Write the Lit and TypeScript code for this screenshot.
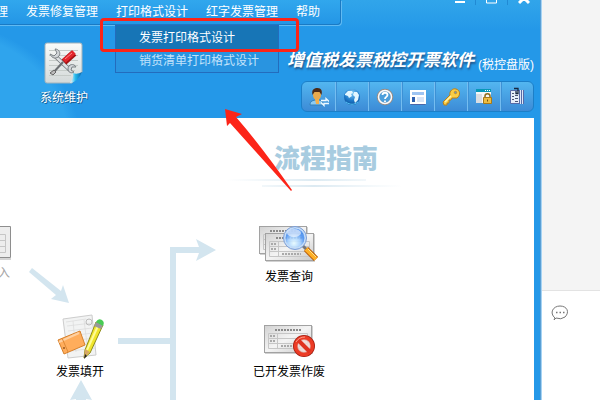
import { LitElement, html, css, svg } from "lit";
import { customElement } from "lit/decorators.js";

const invoiceCard = (x: number, y: number, w: number, h: number) => svg`
  <rect x=${x + 1} y=${y + 1} width=${w} height=${h} fill="#000" opacity=".18"/>
  <rect x=${x + 0.5} y=${y + 0.5} width=${w - 1} height=${h - 1} fill="url(#paper)" stroke="#a2a2a2"/>
  <path d="M${x + 11} ${y + 5}h${w - 22}" stroke="#8a8a8a" stroke-width="2" stroke-dasharray="2 1"/>
  <path d="M${x + 4.5} ${y + 8.5}h${w - 9}v15h-${w - 9}zM${x + 4.5} ${y + 13.5}h${w - 9}M${x + 4.5} ${y + 18.5}h${w - 9}M${x + 13.5} ${y + 8.5}v15" fill="none" stroke="#c6c6c6"/>
  <path d="M${x + 6} ${y + 11}h6M${x + 6} ${y + 16}h6M${x + 17} ${y + 21}h19" stroke="#a9a9a9" stroke-width="2" stroke-dasharray="2 1"/>`;

const paperDefs = svg`<defs><linearGradient id="paper" x1="0" y1="0" x2="1" y2="1"><stop stop-color="#d2d2d2"/><stop offset=".5" stop-color="#f4f4f4"/><stop offset="1" stop-color="#c8c8c8"/></linearGradient></defs>`;

const tools = [
  {
    name: "操作员",
    icon: svg`<path d="M1 18c0-4 3-5 7-5s6 1 6 5z" fill="#8ccbf3" stroke="#357fb8"/><path d="M6 12h4l0 5h-3z" fill="#f4b04c"/><ellipse cx="8" cy="8" rx="4" ry="5" fill="#e8a94c"/><path d="M3.500 8c-1-5 1-7 5-7s5 3 4 7l-2-3-5 0z" fill="#4b2a17"/><path d="M12 13.500h5v-2l3 3M20 16.500h-5v2l-3-3" fill="none" stroke="#eef9ff" stroke-width="1.300"/>`,
  },
  {
    name: "网络",
    icon: svg`<defs><radialGradient id="globe" cx=".5" cy=".25" r=".8"><stop stop-color="#7ccbf8"/><stop offset=".6" stop-color="#1d78c8"/><stop offset="1" stop-color="#0a4c97"/></radialGradient></defs><circle cx="10" cy="10" r="8" fill="url(#globe)"/><path d="M3 7l3-3 4 0 1 2-2 1 1 2-3 2-1-2-3-1zM12 5l3 0 2 3-1 5-3 3-1-3 1-3-2-2z" fill="#e2f6ff"/><path d="M4 15c4 3 8 3 12 0" stroke="#53c3f5" fill="none"/>`,
  },
  {
    name: "帮助",
    icon: svg`<circle cx="10" cy="10" r="7" fill="#4c9edb" stroke="#9b8c83" stroke-width="2.500"/><circle cx="10" cy="10" r="6.500" fill="none" stroke="#f8fbff" stroke-width="1.500"/><path d="M7.500 8c0-3 5-3 5 0 0 2-2.500 1.800-2.500 4M10 13.500v1.500" fill="none" stroke="#fff" stroke-width="1.800"/>`,
  },
  {
    name: "窗口",
    icon: svg`<rect x="2.500" y="3.500" width="15" height="13" fill="#fff" stroke="#fff"/><path d="M4 5h12v3H4z" fill="#9ec4f2"/><path d="M4 10h3v5H4z" fill="#2e5fae"/><path d="M9 10h7v5H9z" fill="#d8e4f6"/><path d="M2.500 17.500h15" stroke="#4c66a8"/>`,
  },
  {
    name: "密钥",
    icon: svg`<path d="M2 15l7-7c-1-4 3-7 6-6 4 1 5 6 1 9l-5 0-1 2-2 0 0 3-2 0 0 2-3 0z" fill="#f9cd45" stroke="#bb7f18"/><path d="M4 15l6-6" stroke="#fff2ab" stroke-width="1.500"/><circle cx="14.500" cy="5.500" r="1.200" fill="#5a9ad8" stroke="#c88d20"/>`,
  },
  {
    name: "锁定",
    icon: svg`<path d="M2 3h15v13H2z" fill="#f5f7f8"/><path d="M2 2h15v3H2z" fill="#0798b7"/><path d="M11 3.500h5" stroke="#fff" stroke-dasharray="1 1"/><path d="M2 7h6v9H2z" fill="#d9dde2"/><path d="M11 11V9c0-3 5-3 5 0v2" fill="none" stroke="#8b6a19" stroke-width="1.500"/><path d="M9.500 10.500h8v6h-8z" fill="#edbd42" stroke="#a77919"/><path d="M13.500 12.500v2" stroke="#76520e"/>`,
  },
  {
    name: "报表",
    icon: svg`<path d="M3.500 3.500h9v13h-9z" fill="#e6edf9" stroke="#566aa8"/><path d="M5 6.500h2M8 8.500h3M5 9.500h2M8 11.500h3M5 12.500h2M8 14.500h3" stroke="#4b5575"/><path d="M13 3h4v14h-4z" fill="#dce7f8"/><path d="M12.500 3v14M14.500 3v14M16.500 3v14" stroke="#566aa8"/><path d="M7 1.500h4v5H9V4" fill="none" stroke="#17263f" stroke-width="1.300"/>`,
  },
];

@customElement("app-root")
export class AppRoot extends LitElement {
  static styles = css`
    :host {
      display: grid;
      grid-template-columns: minmax(0, 9fr) minmax(0, 1fr);
      min-height: 100vh;
      overflow: hidden;
      position: relative;
      background: #f4f4f4;
      font: 12px/16px "Liberation Sans", "Noto Sans CJK SC", sans-serif;
    }
    * { box-sizing: border-box; }
    button {
      border: 0;
      padding: 0;
      background: none;
      color: inherit;
      font: inherit;
      white-space: nowrap;
      cursor: pointer;
    }
    svg { display: block; }
    .window {
      display: flex;
      flex-direction: column;
      padding-right: 6px;
      background:
        radial-gradient(ellipse 150px 120px at -70px 140px, #2fa4ed 0 92%, transparent 100%),
        linear-gradient(#31a5ea, #2498e8 30px);
      box-shadow: 1px 0 #5a9fd4, 2px 0 #a5d3f4;
    }
    .top {
      display: flex;
      justify-content: space-between;
      height: 25px;
    }
    .menu {
      display: flex;
      gap: 18px;
      align-items: flex-start;
      padding: 4px 20px 0 0;
      margin-left: -4px;
      color: #fff;
      background: linear-gradient(#31a7ed, #2496e6);
      border-right: 1px solid #1a7ac4;
      border-bottom: 1px solid #1a7ac4;
      border-radius: 0 0 4px 0;
      box-shadow: 1px 1px #61baf2;
    }
    .dropdown {
      position: absolute;
      z-index: 1;
      top: 25px;
      left: 115px;
      display: flex;
      flex-direction: column;
      width: 164px;
      border: 1px solid #236cbd;
      background: #2994e0;
      color: #c2e3fb;
    }
    .dropdown button { height: 22px; padding-left: 23px; text-align: left; }
    .dropdown .chosen { height: 24px; background: #1775b6; color: #fff; }
    .controls { display: flex; margin-right: -5px; }
    .controls button {
      width: 32px;
      height: 5px;
      border-left: 1px solid #218ad4;
      overflow: hidden;
    }
    .controls button:first-child { border-color: transparent; }
    .controls svg { margin: auto; }
    .header {
      display: flex;
      justify-content: space-between;
      align-items: flex-start;
      height: 93px;
      color: #fff;
    }
    .module {
      display: flex;
      flex-direction: column;
      align-items: center;
      gap: 6px;
      margin: 17px 0 0 40px;
      text-shadow: 1px 1px #17659f, -1px 0 #1d70b2;
    }
    .brand { display: flex; flex-direction: column; align-items: flex-end; }
    .name {
      display: flex;
      align-items: flex-end;
      gap: 4px;
      margin: 20px 0 8px;
      height: 28px;
    }
    h1 {
      margin: 0;
      font: italic 700 17px/28px "Noto Sans CJK SC", sans-serif;
      text-shadow: 1px 2px 2px #23578b;
      white-space: nowrap;
    }
    .edition { line-height: 16px; white-space: nowrap; }
    .tools {
      display: flex;
      border: 1px solid #1c7fc8;
      border-radius: 6px;
      background: linear-gradient(#53b6f0, #3c8bd6);
    }
    .tools button {
      display: grid;
      place-items: center;
      width: 33px;
      height: 29px;
      border-left: 1px solid #75bdf0;
      box-shadow: inset 1px 0 #3d91d5;
    }
    .tools button:first-child { border-left: 0; box-shadow: none; }
    .guide {
      position: relative;
      flex: 1;
      min-height: 282px;
      overflow: hidden;
      background: #fff;
    }
    h2 {
      position: absolute;
      left: 274px;
      top: 23px;
      margin: 0;
      color: #a8cce0;
      font: 900 26px/32px "Noto Sans CJK SC", sans-serif;
      white-space: nowrap;
    }
    .flow { position: absolute; left: 0; top: 0; }
    .node {
      position: absolute;
      display: flex;
      flex-direction: column;
      align-items: center;
      gap: 4px;
      color: #000;
    }
    .import { left: -4px; top: 107px; color: #a5a5a5; }
    .fill { left: 56px; top: 196px; }
    .query { left: 257px; top: 105px; }
    .void { left: 253px; top: 200px; }
    .side { display: flex; flex-direction: column; }
    .bubble {
      flex: 1;
      margin: 290px 0 0 2px;
      padding: 14px 0 0 9px;
      border-top: 1px solid #e3e3e3;
      background: #fff;
    }
    .frame {
      position: absolute;
      z-index: 2;
      left: 100px;
      top: 18px;
      width: 199px;
      height: 34px;
      border: 3px solid #fc2418;
      border-radius: 4px;
      pointer-events: none;
    }
    .pointer { position: absolute; z-index: 2; left: 224px; top: 108px; pointer-events: none; }
  `;

  render() {
    return html`
      <main class="window">
        <div class="top">
          <nav class="menu">
            <button>理</button><button>发票修复管理</button><button>打印格式设计</button><button>红字发票管理</button><button>帮助</button>
          </nav>
          <div class="controls">
            <button aria-label="最小化"><svg width="10" height="5"><path d="M0 1h10v2H0z" fill="#fff"/></svg></button>
            <button aria-label="最大化"><svg width="11" height="5"><path d="M.5-5v8h10v-8" fill="none" stroke="#fff"/></svg></button>
            <button aria-label="关闭"><svg width="12" height="5"><path d="M1 3l5-5 5 5" fill="none" stroke="#fff" stroke-width="3"/></svg></button>
          </div>
        </div>
        <div class="dropdown">
          <button class="chosen">发票打印格式设计</button>
          <button>销货清单打印格式设计</button>
        </div>
        <header class="header">
          <button class="module">
            <svg width="40" height="42" viewBox="0 0 40 42">
              <defs><linearGradient id="sheet" x2="0" y2="1"><stop stop-color="#fafbf9"/><stop offset="1" stop-color="#d3d9d9"/></linearGradient><linearGradient id="fold"><stop stop-color="#fff"/><stop offset=".45" stop-color="#25b9ec"/><stop offset="1" stop-color="#0864ab"/></linearGradient></defs>
              <path d="M3 1h33q2 0 2 2v27l-10 11H3q-2 0-2-2V3q0-2 2-2z" fill="url(#sheet)" stroke="#a3b3bb"/>
              <path d="M5 8.500h29M5 13.500h29M5 18.500h29M5 23.500h29M5 28.500h26M5 33.500h22" stroke="#c5cbc8"/>
              <path d="M11 14l15 14" stroke="#6e7478" stroke-width="4"/><path d="M11 14l15 14" stroke="#dfe2e4" stroke-width="2.500"/>
              <path d="M6 12l4 2 3-3-2-4c4 0 6 4 4 7-2 3-7 3-9-2zM24 27c0-5 6-6 8-2l-4 0-1 3 3 2c-3 2-6 0-6-3z" fill="#d2d6d9" stroke="#7b8185"/>
              <path d="M19 20L9 31" stroke="#6c7073" stroke-width="2"/><path d="M10 28l-4 3 3 2 3-3z" fill="#bbb" stroke="#666"/>
              <path d="M20 20L30 11" stroke="#a31313" stroke-width="7"/><path d="M20 19L30 10" stroke="#e3262c" stroke-width="5"/><path d="M21 17l7-6" stroke="#ff8585"/>
              <path d="M38 30q-5 3-9 1 1 5-3 10 8-1 12-11z" fill="url(#fold)"/>
            </svg>
            <span>系统维护</span>
          </button>
          <div class="brand">
            <div class="name"><h1>增值税发票税控开票软件</h1><span class="edition">(税控盘版)</span></div>
            <div class="tools" role="toolbar">
              ${tools.map((t) => html`<button aria-label=${t.name}><svg width="20" height="20" viewBox="0 0 20 20">${t.icon}</svg></button>`)}
            </div>
          </div>
        </header>
        <section class="guide">
          <h2>流程指南</h2>
          <svg class="flow" width="534" height="282" viewBox="0 118 534 282">
            <defs><linearGradient id="line"><stop stop-color="#e0edf4" stop-opacity="0"/><stop offset=".5" stop-color="#dceaf2"/><stop offset="1" stop-color="#e0edf4" stop-opacity="0"/></linearGradient></defs>
            <path d="M226 179h140v2H226zM262 185h140v2H262z" fill="url(#line)"/>
            <g fill="#d3e5ef">
              <path d="M29 272l3-4 29 23 2-6 6 18-18-4 5-4z"/>
              <path d="M118 338h52v-91h29l-3-8 20 11-20 11 3-8h-23v147h-6v-56h-52z"/>
              <path d="M81 380l11 20-6-1v3H76v-3l-6 1z"/>
            </g>
          </svg>
          <button class="node import">
            <svg width="16" height="36" viewBox="0 0 16 36"><path d="M0 1.500h14.500v31H0" fill="#ededed" stroke="#8e8e8e"/><path d="M0 34h15" stroke="#aaa"/><path d="M0 9.500h9.500v18H0M0 15.500h9M0 21.500h9" fill="none" stroke="#c6c6c6"/></svg>
            <span>入</span>
          </button>
          <button class="node fill">
            <svg width="48" height="46" viewBox="0 0 48 46">
              <path d="M7 5l29-4 4 40-28 3z" fill="#f2f3f3" stroke="#cdcdcd"/>
              <path d="M10 8l20-3M11 12l25-3M12 17l24-3M13 22l24-3M14 27l24-3M15 32l23-3M15 37l24-3M17 7l3 31M28 6l4 32" stroke="#dadada" stroke-width=".7"/><circle cx="33" cy="8" r="3" fill="none" stroke="#bbb"/>
              <path d="M2 26l22-9 5 14-21 9z" fill="#ffad5c" stroke="#d6812d"/><path d="M3 28l20-9" stroke="#ffd0a0" stroke-width="2"/><path d="M6 24l6 14" stroke="#dd8937"/><circle cx="8" cy="34" r="1" fill="#985a20"/>
              <path d="M40 8l7 3-13 28-6 5 1-8z" fill="#f0e52c" stroke="#8e8c1a"/><path d="M42 12L31 36" stroke="#fffb98" stroke-width="2"/><path d="M29 35l5 3-6 6z" fill="#d6a765"/><path d="M29 40l2 2-3 3z" fill="#222"/><path d="M40 8l7 3-2 4-7-3z" fill="#999"/><path d="M40 8q2-4 6-2 3 2 1 6z" fill="#49cc55"/>
            </svg>
            <span>发票填开</span>
          </button>
          <button class="node query">
            <svg width="64" height="42" viewBox="0 0 64 42">
              ${paperDefs}${invoiceCard(2, 3, 48, 28)}${invoiceCard(8, 10, 49, 28)}
              <path d="M46 23l4 4" stroke="#777" stroke-width="3"/><path d="M49 26l10 10" stroke="#b45a09" stroke-width="6"/><path d="M49 26l10 10" stroke="#ffaf25" stroke-width="4"/><path d="M51 26l8 8" stroke="#ffe28b"/>
              <defs><radialGradient id="lens" cx=".45" cy=".75"><stop stop-color="#e7fbff"/><stop offset=".6" stop-color="#a5d0ff"/><stop offset="1" stop-color="#4a90f0"/></radialGradient></defs>
              <circle cx="38" cy="15" r="10.500" fill="url(#lens)" fill-opacity=".9" stroke="#c4dcf7" stroke-width="2"/><circle cx="38" cy="15" r="11.500" fill="none" stroke="#7c9ed6"/><ellipse cx="37" cy="10" rx="7" ry="4" fill="#fff" opacity=".6"/>
            </svg>
            <span>发票查询</span>
          </button>
          <button class="node void">
            <svg width="72" height="42" viewBox="0 0 72 42">
              ${paperDefs}${invoiceCard(11, 7, 48, 28)}
              <circle cx="51" cy="28" r="8.500" fill="none" stroke="#a51e12" stroke-width="5"/><circle cx="51" cy="28" r="8.500" fill="#f9ded8" fill-opacity=".7" stroke="#ec3b25" stroke-width="3.500"/><path d="M45 22l12 12" stroke="#e03320" stroke-width="4"/><path d="M43 24q3-5 9-5" fill="none" stroke="#ff9b88"/>
            </svg>
            <span>已开发票作废</span>
          </button>
        </section>
      </main>
      <aside class="side">
        <div class="bubble">
          <svg width="18" height="18" viewBox="0 0 18 18"><path d="M4 13C-2 8 2 1 9 1s10 6 5 11q-4 3-9 1l-2 2z" fill="none" stroke="#777"/><path d="M5 7.500h1.500M8.500 7.500H10M12 7.500h1.500" stroke="#777" stroke-width="1.500"/></svg>
        </div>
      </aside>
      <div class="frame"></div>
      <svg class="pointer" width="70" height="84" viewBox="224 108 70 84"><path d="M225 109l17 5-6 3q26 30 56 73l-1 1-61-68-3 3z" fill="#fc2418"/></svg>
    `;
  }
}
